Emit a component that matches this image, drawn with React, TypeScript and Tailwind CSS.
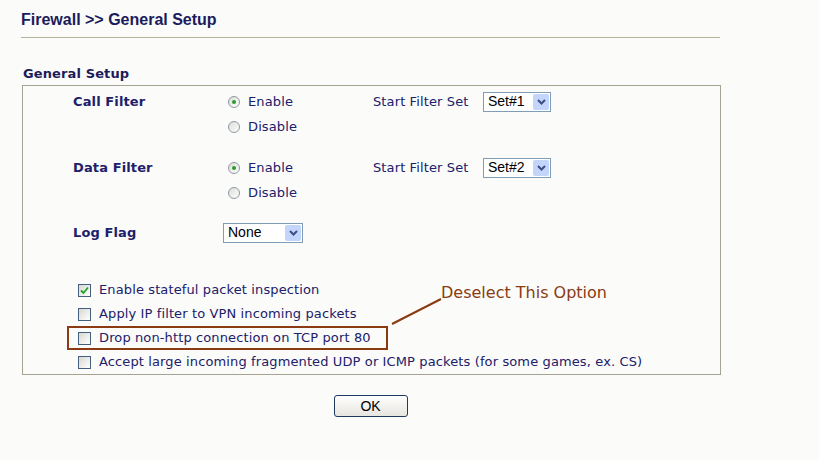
import React from "react";

const verdana = "font-['Verdana','DejaVu_Sans',sans-serif]";
const arial = "font-['Arial','Liberation_Sans',sans-serif]";

function Radio({ checked }: { checked?: boolean }) {
  return (
    <span className="flex h-[12px] w-[12px] items-center justify-center rounded-full border border-[#8d99a6] bg-gradient-to-br from-[#dcdcd6] to-white">
      {checked && <span className="h-[4px] w-[4px] rounded-full bg-[#2e9a2e]" />}
    </span>
  );
}

function Checkbox({ checked }: { checked?: boolean }) {
  return (
    <span className="flex h-[13px] w-[13px] items-center justify-center border border-[#44607e] bg-gradient-to-br from-[#d8d8d2] to-white">
      {checked && (
        <svg width="9" height="9" viewBox="0 0 9 9">
          <path d="M1 4.5 L3.5 7 L8 1.5" fill="none" stroke="#21a121" strokeWidth="1.8" />
        </svg>
      )}
    </span>
  );
}

function Select({ value, width }: { value: string; width: string }) {
  return (
    <div className={`flex h-[20px] items-stretch border border-[#7f9db9] bg-white ${width}`}>
      <span className={`flex flex-1 items-center pl-[4px] text-[14px] tracking-normal text-black ${arial}`}>{value}</span>
      <span className="m-[1px] flex w-[16px] items-center justify-center rounded-[2px] bg-[#c3d5fb]">
        <svg width="9" height="6" viewBox="0 0 9 6">
          <path d="M1 1 L4.5 4.5 L8 1" fill="none" stroke="#3b4f85" strokeWidth="2" />
        </svg>
      </span>
    </div>
  );
}

function RadioOpt({ label, checked }: { label: string; checked?: boolean }) {
  return (
    <div className="flex items-center gap-[8px]">
      <Radio checked={checked} />
      <span>{label}</span>
    </div>
  );
}

function FilterGroup({ label, set }: { label: string; set: string }) {
  return (
    <div>
      <div className="flex h-[25px] items-center">
        <span className="w-[205px] pl-[50px] font-bold">{label}</span>
        <div className="w-[145px]">
          <RadioOpt label="Enable" checked />
        </div>
        <span className="w-[110px]">Start Filter Set</span>
        <Select value={set} width="w-[68px]" />
      </div>
      <div className="flex h-[25px] items-center">
        <span className="w-[205px]" />
        <RadioOpt label="Disable" />
      </div>
    </div>
  );
}

const options = [
  { label: "Enable stateful packet inspection", checked: true },
  { label: "Apply IP filter to VPN incoming packets" },
  { label: "Drop non-http connection on TCP port 80", marked: true },
  { label: "Accept large incoming fragmented UDP or ICMP packets (for some games, ex. CS)" },
];

export default function App() {
  return (
    <div className={`relative h-[460px] w-[819px] bg-[#fbfbf9] pl-[21px] pt-[10px] text-[13px] tracking-[0.12px] text-[#20206a] ${verdana}`}>
      <h1 className={`h-[20px] text-[16px] font-bold leading-[20px] tracking-normal text-[#1b1b5c] ${arial}`}>
        Firewall &gt;&gt; General Setup
      </h1>
      <div className="mt-[7px] h-px w-[699px] bg-[#b7b09a]" />

      <h2 className="mt-[28px] h-[16px] pl-[2px] text-[13px] font-bold leading-[16px] text-[#1b1b5c]">General Setup</h2>

      <div className="mt-[3px] ml-[1px] w-[699px] border border-[#a6a292] pt-[3px]">
        <FilterGroup label="Call Filter" set="Set#1" />
        <div className="mt-[16px]">
          <FilterGroup label="Data Filter" set="Set#2" />
        </div>

        <div className="mt-[15px] flex h-[25px] items-center">
          <span className="w-[200px] pl-[50px] font-bold">Log Flag</span>
          <Select value="None" width="w-[80px]" />
        </div>

        <div className="mt-[33px] flex flex-col">
          {options.map((o) => (
            <div
              key={o.label}
              className={`ml-[44px] flex h-[24px] items-center gap-[8px] border-2 pl-[9px] ${
                o.marked ? "w-[321px] border-[#8a3b12]" : "w-fit border-transparent"
              }`}
            >
              <Checkbox checked={o.checked} />
              <span className="whitespace-nowrap">{o.label}</span>
            </div>
          ))}
        </div>
      </div>

      <div className="mt-[20px] flex w-[699px] justify-center">
        <button
          className={`h-[22px] w-[74px] rounded-[3px] border border-[#1d3a5f] bg-gradient-to-b from-white to-[#e6e5de] text-[14px] tracking-normal text-black ${arial}`}
        >
          OK
        </button>
      </div>

      <span className="absolute left-[441px] top-[284px] text-[16px] leading-[18px] tracking-normal text-[#8a3b12]">Deselect This Option</span>
      <svg className="absolute left-[388px] top-[295px]" width="56" height="34" viewBox="0 0 56 34">
        <path d="M4 29 L53 4" stroke="#8a3b12" strokeWidth="2" fill="none" />
      </svg>
    </div>
  );
}
